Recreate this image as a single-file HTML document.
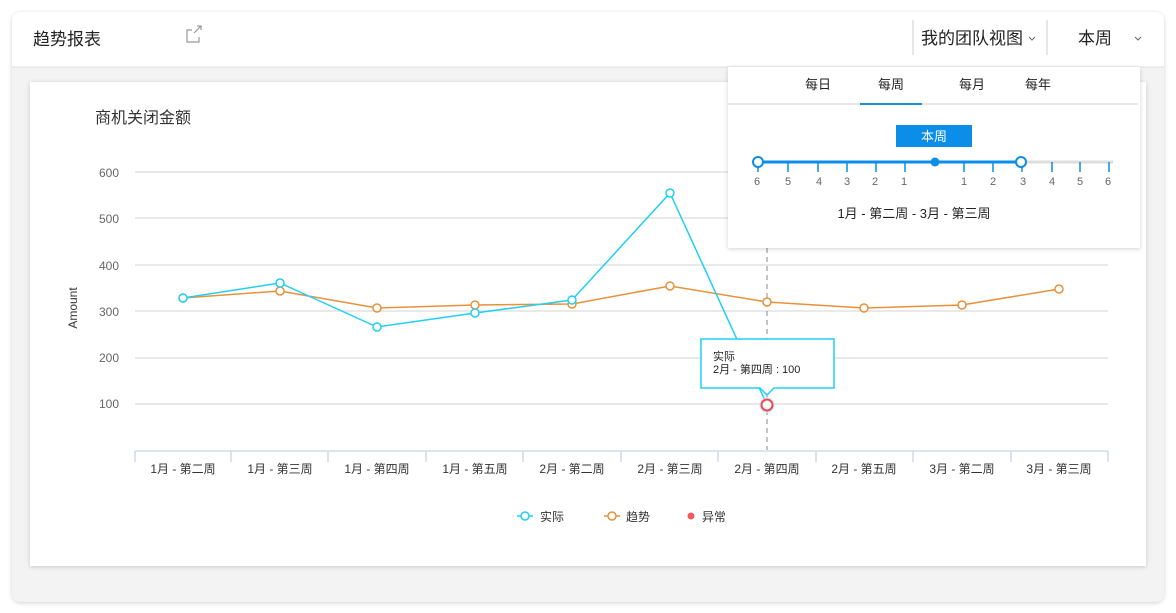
<!DOCTYPE html>
<html><head><meta charset="utf-8"><style>
body{margin:0;width:1176px;height:613px;background:#fff;overflow:hidden;font-family:"Liberation Sans","Noto Sans CJK SC",sans-serif;}
</style></head><body>
<svg width="1176" height="613" xmlns="http://www.w3.org/2000/svg" style="position:absolute;left:0;top:0" font-family="Liberation Sans, Noto Sans CJK SC, sans-serif">
<defs>
<filter id="sh" x="-5%" y="-5%" width="110%" height="110%"><feDropShadow dx="0" dy="1" stdDeviation="2" flood-color="#000" flood-opacity="0.18"/></filter>
</defs>
<rect x="12" y="12" width="1152" height="590" rx="9" fill="#f3f3f3" filter="url(#sh)"/>
<path d="M21 12 H1155 A9 9 0 0 1 1164 21 V67 H12 V21 A9 9 0 0 1 21 12Z" fill="#fff"/>
<line x1="12" y1="67" x2="1164" y2="67" stroke="#ddd"/>
<text x="33" y="45" font-size="17" fill="#222">趋势报表</text>
<g stroke="#999" fill="none" stroke-width="1.2"><path d="M192 30 H187 V42 H199 V37"/><path d="M194 33 L201 26 M197 26 H201 V30"/></g>
<line x1="913" y1="20" x2="913" y2="55" stroke="#ddd" stroke-width="1.5"/>
<text x="921" y="44" font-size="17" fill="#222">我的团队视图</text>
<path d="M1029 37 l3 3 l3 -3" stroke="#666" fill="none"/>
<line x1="1047" y1="20" x2="1047" y2="55" stroke="#ddd" stroke-width="1.5"/>
<text x="1078" y="44" font-size="17" fill="#222">本周</text>
<path d="M1135 37 l3 3 l3 -3" stroke="#666" fill="none"/>

<rect x="30" y="82" width="1116" height="484" fill="#fff" filter="url(#sh)"/>
<text x="95" y="123" font-size="16" fill="#333">商机关闭金额</text>
<g stroke="#e2e2e2" stroke-width="1.5">
<line x1="135" y1="172" x2="1108" y2="172"/><line x1="135" y1="218" x2="1108" y2="218"/><line x1="135" y1="265" x2="1108" y2="265"/><line x1="135" y1="311" x2="1108" y2="311"/><line x1="135" y1="358" x2="1108" y2="358"/><line x1="135" y1="404" x2="1108" y2="404"/>
</g>
<g font-size="12" fill="#666" text-anchor="end">
<text x="119" y="177">600</text><text x="119" y="223">500</text><text x="119" y="270">400</text><text x="119" y="316">300</text><text x="119" y="362">200</text><text x="119" y="408">100</text>
</g>
<text transform="translate(77,308) rotate(-90)" font-size="12" fill="#333" text-anchor="middle">Amount</text>
<g stroke="#cfdbe8" stroke-width="1.5"><line x1="135" y1="451" x2="1108" y2="451"/>
<path d="M135 451v11M231 451v11M328 451v11M426 451v11M523 451v11M621 451v11M718 451v11M816 451v11M913 451v11M1011 451v11M1108 451v11"/></g>
<g font-size="12" fill="#333" text-anchor="middle">
<text x="183" y="473">1月 - 第二周</text><text x="280" y="473">1月 - 第三周</text><text x="377" y="473">1月 - 第四周</text><text x="475" y="473">1月 - 第五周</text><text x="572" y="473">2月 - 第二周</text><text x="670" y="473">2月 - 第三周</text><text x="767" y="473">2月 - 第四周</text><text x="864" y="473">2月 - 第五周</text><text x="962" y="473">3月 - 第二周</text><text x="1059" y="473">3月 - 第三周</text>
</g>
<line x1="767" y1="248" x2="767" y2="450" stroke="#888" stroke-dasharray="5,4"/>
<polyline points="183,298 280,291 377,308 475,305 572,304 670,286 767,302 864,308 962,305 1059,289" fill="none" stroke="#e8913a" stroke-width="1.5"/>
<g fill="#fff" stroke="#e8913a" stroke-width="1.5"><circle cx="183" cy="298" r="4"/><circle cx="280" cy="291" r="4"/><circle cx="377" cy="308" r="4"/><circle cx="475" cy="305" r="4"/><circle cx="572" cy="304" r="4"/><circle cx="670" cy="286" r="4"/><circle cx="767" cy="302" r="4"/><circle cx="864" cy="308" r="4"/><circle cx="962" cy="305" r="4"/><circle cx="1059" cy="289" r="4"/></g>
<polyline points="183,298 280,283 377,327 475,313 572,300 670,193 767,405" fill="none" stroke="#1ed0f5" stroke-width="1.5"/>
<g fill="#fff" stroke="#1ed0f5" stroke-width="1.5"><circle cx="183" cy="298" r="4"/><circle cx="280" cy="283" r="4"/><circle cx="377" cy="327" r="4"/><circle cx="475" cy="313" r="4"/><circle cx="572" cy="300" r="4"/><circle cx="670" cy="193" r="4"/></g>
<circle cx="767" cy="405" r="8" fill="#bdf0fb" opacity="0.7"/>
<circle cx="767" cy="405" r="5.5" fill="#fff" stroke="#f0484f" stroke-width="2"/>
<path d="M701 339 H834 V388 H774 L767 395 L760 388 H701 Z" fill="#fff" stroke="#1ed0f5" stroke-width="1.5"/>
<text x="713" y="360" font-size="11" fill="#222">实际</text>
<text x="713" y="373" font-size="11" fill="#222">2月 - 第四周 : 100</text>
<g font-size="12" fill="#333">
<line x1="517" y1="516" x2="533" y2="516" stroke="#1ed0f5" stroke-width="1.5"/><circle cx="525" cy="516" r="4" fill="#fff" stroke="#1ed0f5" stroke-width="1.5"/><text x="540" y="521">实际</text>
<line x1="604" y1="516" x2="620" y2="516" stroke="#e8913a" stroke-width="1.5"/><circle cx="612" cy="516" r="4" fill="#fff" stroke="#e8913a" stroke-width="1.5"/><text x="626" y="521">趋势</text>
<circle cx="691" cy="516" r="3.5" fill="#f05a5f"/><text x="702" y="521">异常</text>
</g>

<rect x="728" y="67" width="412" height="181" fill="#fff" filter="url(#sh)"/>
<g font-size="13" fill="#222" text-anchor="middle"><text x="818" y="89">每日</text><text x="891" y="89">每周</text><text x="972" y="89">每月</text><text x="1038" y="89">每年</text></g>
<line x1="728" y1="104" x2="1138" y2="104" stroke="#e0e0e0" stroke-width="1.5"/>
<line x1="860" y1="104" x2="922" y2="104" stroke="#1a8fe3" stroke-width="2"/>
<rect x="896" y="125" width="76" height="22" fill="#0b8de8"/>
<text x="934" y="141" font-size="13" fill="#fff" text-anchor="middle">本周</text>
<line x1="758" y1="162" x2="1113" y2="162" stroke="#ddd" stroke-width="3"/>
<line x1="758" y1="162" x2="1021" y2="162" stroke="#0b8de8" stroke-width="3"/>
<g stroke="#0b8de8" stroke-width="1.5"><path d="M758 162v10M788 162v10M818 162v10M847 162v10M876 162v10M905 162v10M964 162v10M993 162v10M1022 162v10M1052 162v10M1080 162v10M1109 162v10"/></g>
<circle cx="935" cy="162" r="4.5" fill="#0b8de8"/>
<circle cx="758" cy="162" r="5" fill="#fff" stroke="#0b8de8" stroke-width="2"/>
<circle cx="1021" cy="162" r="5" fill="#fff" stroke="#0b8de8" stroke-width="2"/>
<g font-size="11" fill="#666" text-anchor="middle"><text x="757" y="185">6</text><text x="788" y="185">5</text><text x="819" y="185">4</text><text x="847" y="185">3</text><text x="875" y="185">2</text><text x="904" y="185">1</text><text x="964" y="185">1</text><text x="993" y="185">2</text><text x="1023" y="185">3</text><text x="1052" y="185">4</text><text x="1080" y="185">5</text><text x="1108" y="185">6</text></g>
<text x="914" y="218" font-size="13" fill="#222" text-anchor="middle">1月 - 第二周 - 3月 - 第三周</text>
</svg>
</body></html>
